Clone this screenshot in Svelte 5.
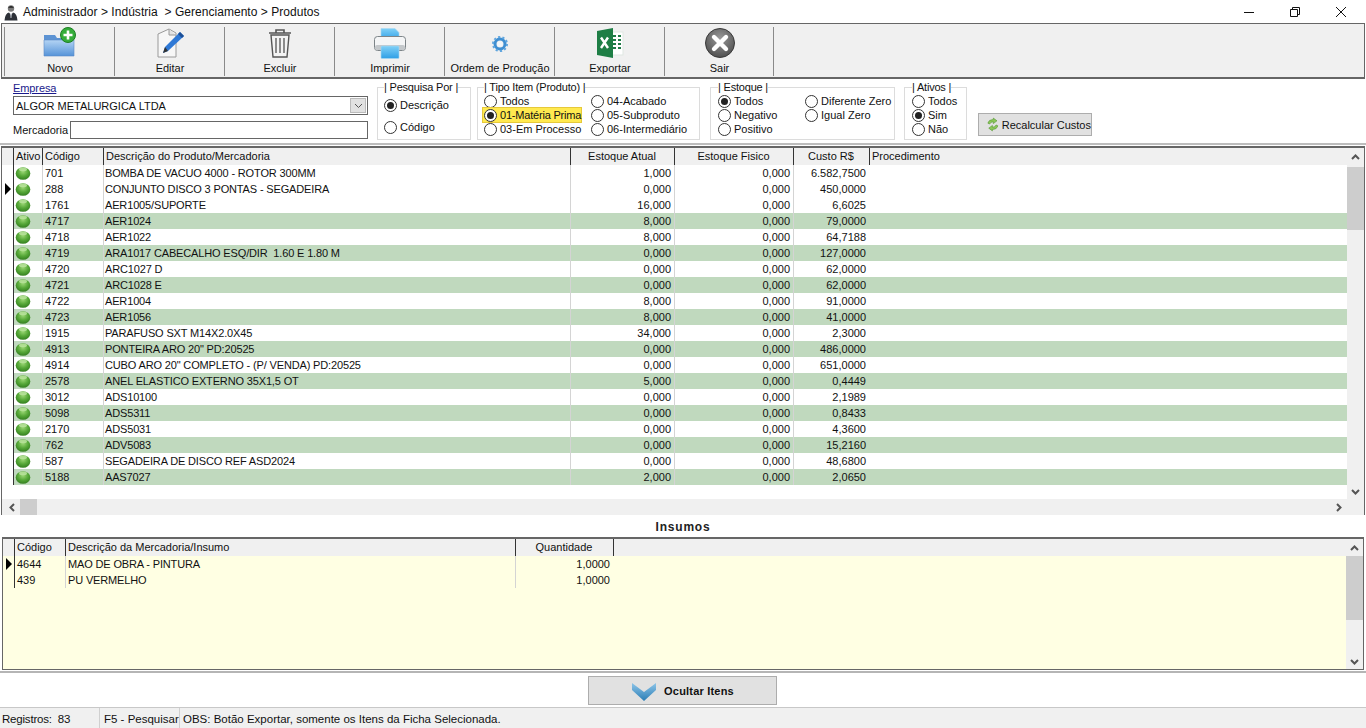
<script>
  const rows = [
    ['701','BOMBA DE VACUO 4000 - ROTOR 300MM','1,000','6.582,7500'],
    ['288','CONJUNTO DISCO 3 PONTAS - SEGADEIRA','0,000','450,0000'],
    ['1761','AER1005/SUPORTE','16,000','6,6025'],
    ['4717','AER1024','8,000','79,0000'],
    ['4718','AER1022','8,000','64,7188'],
    ['4719','ARA1017 CABECALHO ESQ/DIR  1.60 E 1.80 M','0,000','127,0000'],
    ['4720','ARC1027 D','0,000','62,0000'],
    ['4721','ARC1028 E','0,000','62,0000'],
    ['4722','AER1004','8,000','91,0000'],
    ['4723','AER1056','8,000','41,0000'],
    ['1915','PARAFUSO SXT M14X2.0X45','34,000','2,3000'],
    ['4913','PONTEIRA ARO 20" PD:20525','0,000','486,0000'],
    ['4914','CUBO ARO 20" COMPLETO - (P/ VENDA) PD:20525','0,000','651,0000'],
    ['2578','ANEL ELASTICO EXTERNO 35X1,5 OT','5,000','0,4449'],
    ['3012','ADS10100','0,000','2,1989'],
    ['5098','ADS5311','0,000','0,8433'],
    ['2170','ADS5031','0,000','4,3600'],
    ['762','ADV5083','0,000','15,2160'],
    ['587','SEGADEIRA DE DISCO REF ASD2024','0,000','48,6800'],
    ['5188','AAS7027','2,000','2,0650']
  ];
  const tipo = [
    ['Todos', false, false], ['04-Acabado', false, false],
    ['01-Matéria Prima', true, true], ['05-Subproduto', false, false],
    ['03-Em Processo', false, false], ['06-Intermediário', false, false]
  ];
  const estoque = [
    ['Todos', true], ['Diferente Zero', false],
    ['Negativo', false], ['Igual Zero', false],
    ['Positivo', false]
  ];
  const ativos = [['Todos', false], ['Sim', true], ['Não', false]];
</script>

<svg class="defs" width="0" height="0" aria-hidden="true">
  <defs>
    <radialGradient id="ballg" cx="50%" cy="35%" r="65%">
      <stop offset="0" stop-color="#9ad673"/>
      <stop offset="0.55" stop-color="#56a838"/>
      <stop offset="1" stop-color="#347f20"/>
    </radialGradient>
    <linearGradient id="foldg" x1="0" y1="0" x2="0" y2="1">
      <stop offset="0" stop-color="#b4d4f4"/>
      <stop offset="1" stop-color="#5593d8"/>
    </linearGradient>
    <linearGradient id="chevg" x1="0" y1="0" x2="0" y2="1">
      <stop offset="0" stop-color="#8cc4e8"/>
      <stop offset="1" stop-color="#2a7db5"/>
    </linearGradient>
    <linearGradient id="printg" x1="0" y1="0" x2="0" y2="1">
      <stop offset="0" stop-color="#7fd0f7"/>
      <stop offset="1" stop-color="#2f9fe6"/>
    </linearGradient>
    <radialGradient id="exitg" cx="50%" cy="35%" r="70%">
      <stop offset="0" stop-color="#9a9a9a"/>
      <stop offset="1" stop-color="#4a4a4a"/>
    </radialGradient>
    <symbol id="ball" viewBox="0 0 16 14">
      <ellipse cx="8" cy="7.5" rx="7.3" ry="6.3" fill="url(#ballg)"/>
      <ellipse cx="8" cy="3.4" rx="4" ry="1.8" fill="#bfe6a2" opacity=".8"/>
    </symbol>
  </defs>
</svg>

<div class="app">
  <header class="title">
    <svg class="person" width="14" height="17" viewBox="0 0 14 17">
      <circle cx="7" cy="4.5" r="3.2" fill="#7a7a7a"/>
      <path d="M4 3.8 Q7 .2 10 3.8 Z" fill="#222"/>
      <path d="M0.5 16.5 Q1 9.5 5 8.6 L7 11 L9 8.6 Q13 9.5 13.5 16.5 Z" fill="#2d3138"/>
      <path d="M6.2 9.4 L7.8 9.4 L7.4 14 L6.6 14 Z" fill="#c9ced6"/>
    </svg>
    <span>Administrador &gt; Indústria &nbsp;&gt; Gerenciamento &gt; Produtos</span>
    <div class="winctl">
      <svg width="12" height="12" viewBox="0 0 12 12"><path d="M1 6.5H11" stroke="#111" fill="none"/></svg>
      <svg width="12" height="12" viewBox="0 0 12 12"><path d="M1.5 3.5H8.5V10.5H1.5Z M3.5 3.5V1.5H10.5V8.5H8.5" stroke="#111" fill="none"/></svg>
      <svg width="12" height="12" viewBox="0 0 12 12"><path d="M1 1L11 11M11 1L1 11" stroke="#111" fill="none"/></svg>
    </div>
  </header>

  <nav class="toolbar">
    <button class="tool">
      <svg width="36" height="32" viewBox="0 0 36 32">
        <path d="M2 8H13L15 11H32V29H2Z" fill="#5d93d3"/>
        <path d="M2 13H32V29H2Z" fill="url(#foldg)" stroke="#5b8cc8" stroke-width=".6"/>
        <circle cx="26" cy="8" r="7.5" fill="#35ad3a" stroke="#1d7f24"/>
        <path d="M26 3.5V12.5M21.5 8H30.5" stroke="#fff" stroke-width="2.6"/>
      </svg>
      <span>Novo</span>
    </button>
    <button class="tool">
      <svg width="32" height="32" viewBox="0 0 32 32">
        <path d="M4 7L15 2L22 6V30H4Z" fill="#f7f7f7" stroke="#9a9a9a"/>
        <path d="M15 2V8H22" fill="#e3e3e3" stroke="#9a9a9a"/>
        <path d="M26 5L30 9L14 24L9 26L11 20Z" fill="#2f79d6"/>
        <path d="M11 20L14 24L9 26Z" fill="#333"/>
        <path d="M26 5L30 9L28 11L24 7Z" fill="#1d4f96"/>
      </svg>
      <span>Editar</span>
    </button>
    <button class="tool">
      <svg width="28" height="32" viewBox="0 0 28 32">
        <path d="M3 6H25M10 6V3H18V6" stroke="#555" stroke-width="1.6" fill="none"/>
        <path d="M5 8L7 30H21L23 8Z" fill="#f4f4f4" stroke="#555" stroke-width="1.4"/>
        <path d="M10 11V26M14 11V26M18 11V26" stroke="#555" stroke-width="1.3"/>
      </svg>
      <span>Excluir</span>
    </button>
    <button class="tool">
      <svg width="34" height="32" viewBox="0 0 34 32">
        <path d="M8 1.5H22L26 5.5V13H8Z" fill="url(#printg)" stroke="#a8d8f2" stroke-width=".6"/>
        <rect x="1.5" y="9.5" width="31" height="14" rx="3" fill="#f4f5f6" stroke="#7d8488"/>
        <rect x="2" y="18" width="30" height="5" rx="2" fill="#c4c8cb"/>
        <rect x="8" y="19" width="18" height="12.5" rx="1" fill="url(#printg)" stroke="#a8d8f2" stroke-width=".6"/>
      </svg>
      <span>Imprimir</span>
    </button>
    <button class="tool">
      <svg width="32" height="32" viewBox="0 0 32 32">
        <circle cx="16" cy="17" r="5" fill="none" stroke="#3f8fd2" stroke-width="3"/>
        <circle cx="16" cy="17" r="7" fill="none" stroke="#5fa5de" stroke-width="2" stroke-dasharray="2.2 2.2"/>
        <circle cx="16" cy="17" r="2.6" fill="#f2f7fb"/>
      </svg>
      <span>Ordem de Produção</span>
    </button>
    <button class="tool">
      <svg width="32" height="32" viewBox="0 0 32 32">
        <rect x="12" y="5" width="17" height="23" fill="#fff" stroke="#dfe7e2"/>
        <path d="M19 9H22M24 9H27M19 13H22M24 13H27M19 17H22M24 17H27M19 21H22M24 21H27" stroke="#1f7a46" stroke-width="2"/>
        <path d="M3 4L19 1V31L3 28Z" fill="#1e7e45"/>
        <path d="M7 10.5L14 21M14 10.5L7 21" stroke="#fff" stroke-width="2.4"/>
      </svg>
      <span>Exportar</span>
    </button>
    <button class="tool">
      <svg width="32" height="32" viewBox="0 0 32 32">
        <circle cx="16" cy="16" r="14.5" fill="url(#exitg)" stroke="#3a3a3a"/>
        <path d="M10 10L22 22M22 10L10 22" stroke="#fff" stroke-width="4.4" stroke-linecap="round"/>
      </svg>
      <span>Sair</span>
    </button>
  </nav>

  <section class="filters">
    <div class="empresa">
      <a class="link" href="#empresa">Empresa</a>
      <div class="combo"><span>ALGOR METALURGICA LTDA</span>
        <i class="comboarrow">
          <svg width="9" height="6" viewBox="0 0 9 6"><path d="M1 1L4.5 4.5L8 1" stroke="#555" fill="none"/></svg>
        </i>
      </div>
      <div class="merc"><span>Mercadoria</span><div class="input"></div></div>
    </div>

    <fieldset class="g pesquisa">
      <legend>| Pesquisa Por |</legend>
      <label class="r"><i class="dot on"></i>Descrição</label>
      <label class="r"><i class="dot"></i>Código</label>
    </fieldset>

    <fieldset class="g tipo">
      <legend>| Tipo Item (Produto) |</legend>
      {#each tipo as [t, on, hi]}
        <label class="r" class:hi><i class="dot" class:on></i>{t}</label>
      {/each}
    </fieldset>

    <fieldset class="g estoque">
      <legend>| Estoque |</legend>
      {#each estoque as [t, on]}
        <label class="r"><i class="dot" class:on></i>{t}</label>
      {/each}
    </fieldset>

    <fieldset class="g ativos">
      <legend>| Ativos |</legend>
      {#each ativos as [t, on]}
        <label class="r"><i class="dot" class:on></i>{t}</label>
      {/each}
    </fieldset>

    <button class="recalc">
      <svg width="15" height="15" viewBox="0 0 15 15">
        <path d="M2 6Q3 2 8 2L8 0.5L12 3.5L8 6.5V4.5Q5 4.5 4 7Z" fill="#8cc85a" stroke="#4b8f2a" stroke-width=".6"/>
        <path d="M13 9Q12 13 7 13L7 14.5L3 11.5L7 8.5V10.5Q10 10.5 11 8Z" fill="#8cc85a" stroke="#4b8f2a" stroke-width=".6"/>
      </svg>
      Recalcular Custos
    </button>
  </section>

  <section class="grid main">
    <div class="gbody">
      <div class="table">
        <div class="row head">
          <div class="c ind"></div><div class="c dk">Ativo</div><div class="c dk">Código</div>
          <div class="c dk">Descrição do Produto/Mercadoria</div>
          <div class="c dk ctr">Estoque Atual</div><div class="c dk ctr">Estoque Fisico</div>
          <div class="c dk ctr">Custo R$</div><div class="c dk">Procedimento</div>
        </div>
        {#each rows as r, i}
          <div class="row" class:green={i >= 3 && (i - 3) % 2 === 0}>
            <div class="c ind">{#if i === 1}<i class="ptr"></i>{/if}</div>
            <div class="c dk ballc"><svg width="16" height="14"><use href="#ball"/></svg></div>
            <div class="c">{r[0]}</div>
            <div class="c caps">{r[1]}</div>
            <div class="c num">{r[2]}</div>
            <div class="c num">0,000</div>
            <div class="c num">{r[3]}</div>
            <div class="c none"></div>
          </div>
        {/each}
      </div>
      <div class="vs vs1">
        <svg width="9" height="6" viewBox="0 0 9 6"><path d="M1 5L4.5 1.5L8 5" stroke="#555" stroke-width="2" fill="none"/></svg>
        <div class="thumb"></div>
        <svg class="end" width="9" height="6" viewBox="0 0 9 6"><path d="M1 1L4.5 4.5L8 1" stroke="#555" stroke-width="2" fill="none"/></svg>
      </div>
    </div>
    <div class="hs">
      <svg width="6" height="9" viewBox="0 0 6 9"><path d="M5 1L1.5 4.5L5 8" stroke="#555" stroke-width="2" fill="none"/></svg>
      <div class="hthumb"></div>
      <svg class="hend" width="6" height="9" viewBox="0 0 6 9"><path d="M1 1L4.5 4.5L1 8" stroke="#555" stroke-width="2" fill="none"/></svg>
    </div>
  </section>

  <h2 class="insumos">Insumos</h2>

  <section class="grid sub">
    <div class="gbody">
      <div class="table">
        <div class="row head">
          <div class="c ind"></div><div class="c dk">Código</div>
          <div class="c dk">Descrição da Mercadoria/Insumo</div>
          <div class="c dk ctr">Quantidade</div><div class="c dk none"></div>
        </div>
        <div class="row">
          <div class="c ind"><i class="ptr"></i></div><div class="c dk">4644</div>
          <div class="c caps">MAO DE OBRA - PINTURA</div><div class="c num">1,0000</div><div class="c none"></div>
        </div>
        <div class="row">
          <div class="c ind"></div><div class="c dk">439</div>
          <div class="c caps">PU VERMELHO</div><div class="c num">1,0000</div><div class="c none"></div>
        </div>
      </div>
      <div class="vs vs2">
        <svg width="9" height="6" viewBox="0 0 9 6"><path d="M1 5L4.5 1.5L8 5" stroke="#555" stroke-width="2" fill="none"/></svg>
        <div class="thumb"></div>
        <svg class="end" width="9" height="6" viewBox="0 0 9 6"><path d="M1 1L4.5 4.5L8 1" stroke="#555" stroke-width="2" fill="none"/></svg>
      </div>
    </div>
  </section>

  <div class="action">
    <button class="ocultar">
      <svg width="26" height="22" viewBox="0 0 26 22">
        <path d="M1 3L13 12L25 3V10L13 21L1 10Z" fill="url(#chevg)"/>
      </svg>
      <b>Ocultar Itens</b>
    </button>
  </div>

  <footer class="status">
    <div class="s1">Registros:&nbsp; 83</div>
    <div class="s2">F5 - Pesquisar</div>
    <div class="s3">OBS: Botão Exportar, somente os Itens da Ficha Selecionada.</div>
  </footer>
</div>

<style>
  :global(body) { background: #fff; overflow: hidden; }
  .defs { position: absolute; }
  .app {
    width: 1366px; height: 728px; display: flex; flex-direction: column;
    font-family: "Liberation Sans", Arial, sans-serif; font-size: 11px; color: #111;
    overflow: hidden; background: #fff;
  }
  button { font: inherit; color: inherit; }

  .title { height: 23px; display: flex; align-items: center; padding-left: 4px; gap: 5px; font-size: 12px; letter-spacing: .04px; flex: none; }
  .person { flex: none; margin-top: 2px; }
  .winctl { margin-left: auto; display: flex; gap: 34px; padding-right: 19px; }

  .toolbar {
    height: 56px; margin: 0 1px; flex: none; display: flex; padding: 3px 0 1px 2px; box-sizing: border-box;
    background: #f0f0f0; border: 1px solid #666; border-bottom-width: 2px;
  }
  .tool {
    width: 110px; box-sizing: border-box; background: none; border: 0; border-left: 1px solid #8a8a8a;
    padding: 0 0 0 1px; display: flex; flex-direction: column; align-items: center; justify-content: space-between;
  }
  .tool:last-child { width: 110px; border-right: 1px solid #8a8a8a; }
  .tool span { line-height: 13px; padding-bottom: 1px; white-space: nowrap; }
  .tool svg { flex: none; }

  .filters {
    height: 65px; flex: none; box-sizing: border-box; display: flex; align-items: flex-start;
    padding: 0 0 0 13px; border-bottom: 2px solid #bdbdbd; margin-top: 1px;
  }
  .empresa { width: 355px; padding-top: 2px; flex: none; }
  .link { color: #1a1a8c; display: block; line-height: 13px; letter-spacing: -.1px; }
  .combo {
    height: 19px; margin-top: 1px; box-sizing: border-box; border: 1px solid #666; background: #fff;
    display: flex; align-items: center; padding-left: 2px; font-size: 11px;
  }
  .comboarrow {
    margin-left: auto; width: 16px; height: 15px; margin-right: 1px; background: #e1e1e1; border: 1px solid #bbb; box-sizing: border-box;
    display: flex; align-items: center; justify-content: center;
  }
  .merc { display: flex; align-items: center; gap: 2px; margin-top: 6px; }
  .input { flex: 1; height: 18px; box-sizing: border-box; border: 1px solid #666; background: #fff; }

  .g {
    margin: 1px 0 0; padding: 0; border: 1px solid #dcdcdc; box-sizing: border-box; min-width: 0;
    height: 59px; display: grid;
  }
  legend { padding: 0; margin-left: 0; line-height: 13px; font-size: 11px; white-space: nowrap; letter-spacing: -.2px; }
  .pesquisa { margin-left: 9px; width: 94px; padding: 0 0 0 6px; grid-template-rows: 22px 22px; align-content: start; }
  .tipo { margin-left: 6px; width: 223px; padding: 0 0 0 6px; grid-template-columns: 107px 1fr; grid-auto-rows: 14px; align-content: start; }
  .estoque { margin-left: 10px; width: 185px; padding: 0 0 0 7px; grid-template-columns: 87px 1fr; grid-auto-rows: 14px; align-content: start; }
  .ativos { margin-left: 9px; width: 63px; padding: 0 0 0 7px; grid-auto-rows: 14px; align-content: start; }
  .r { display: flex; align-items: center; gap: 3px; white-space: nowrap; font-size: 11px; }
  .r.hi { background: #ffe94f; box-shadow: 0 0 0 1px #e6c93a; margin-left: -1px; padding-left: 1px; width: 97px; letter-spacing: -.2px; }
  .dot {
    width: 13px; height: 13px; border-radius: 50%; border: 1px solid #333; box-sizing: border-box; background: #fff;
    display: flex; align-items: center; justify-content: center; flex: none;
  }
  .dot.on::after { content: ""; width: 7px; height: 7px; border-radius: 50%; background: #222; }

  .recalc {
    margin: 33px 0 0 11px; width: 114px; height: 23px; box-sizing: border-box; background: #e1e1e1; border: 1px solid #adadad;
    display: flex; align-items: center; gap: 2px; padding: 0 0 0 7px; font-size: 11px; white-space: nowrap;
  }

  .grid { flex: none; box-sizing: border-box; border: 1px solid #666; border-top-width: 2px; }
  .main { margin: 1px 1px 0; height: 369px; }
  .sub { margin: 0 2px; height: 133px; background: #ffffe3; }
  .gbody { display: flex; }
  .main .gbody { height: 351px; }
  .sub .gbody { height: 130px; }
  .table { flex: 1; min-width: 0; }
  .sub .table { background: #ffffe3; }
  .row { display: grid; height: 16px; line-height: 16px; }
  .main .row { grid-template-columns: 11px 29px 61px 467px 104px 119px 76px 1fr; }
  .sub .row { grid-template-columns: 11px 51px 450px 98px 1fr; }
  .row.head { height: 17px; line-height: 17px; background: #f0f0f0; }
  .row.green { background: #c0d9be; }
  .c { box-sizing: border-box; padding: 0 3px 0 2px; border-left: 1px solid #d4d4d4; white-space: pre; overflow: hidden; position: relative; }
  .c.dk, .head .c { border-left-color: #333; }
  .c.none { border-left-color: transparent; }
  .head .c.none { border-left-color: #333; }
  .caps { padding-left: 1px; letter-spacing: -.15px; }
  .sub .caps { padding-left: 2px; }
  .c.ind { border-left: 0; padding: 0; background: #fff; display: flex; align-items: center; justify-content: center; }
  .head .c.ind { background: #f0f0f0; }
  .sub .c.ind { background: #ffffe3; }
  .sub .head .c.ind { background: #f0f0f0; }
  .ctr { text-align: center; }
  .num { text-align: right; }
  .ballc { padding: 1px 0 0 1px; line-height: 0; }
  .ptr { width: 0; height: 0; border-left: 6px solid #000; border-top: 6px solid transparent; border-bottom: 6px solid transparent; }

  .vs { width: 17px; flex: none; background: #f0f0f0; display: flex; flex-direction: column; align-items: center; padding: 6px 0 4px; box-sizing: border-box; }
  .vs .thumb { width: 100%; background: #cdcdcd; flex: none; }
  .vs1 .thumb { height: 63px; margin-top: 7px; }
  .vs2 .thumb { height: 64px; margin-top: 5px; }
  .vs .end { margin-top: auto; }
  .hs { height: 16px; background: #f0f0f0; display: flex; align-items: center; padding-left: 7px; padding-right: 22px; }
  .hthumb { width: 17px; height: 100%; background: #cdcdcd; margin-left: 5px; }
  .hend { margin-left: auto; }

  .insumos { margin: 0; height: 22px; line-height: 21px; box-sizing: border-box; padding-top: 2px; flex: none; text-align: center; font-size: 12px; letter-spacing: .8px; font-weight: 700; color: #222; }

  .action {
    height: 36px; flex: none; box-sizing: border-box; border-top: 2px solid #b5b5b5; margin: 1px 0 0;
    display: flex; justify-content: center; padding: 3px 1px 0 0;
  }
  .ocultar {
    width: 189px; height: 29px; box-sizing: border-box; background: #e1e1e1; border: 1px solid #adadad;
    display: flex; align-items: center; justify-content: center; gap: 7px; padding: 0;
  }
  .ocultar b { font-size: 11px; letter-spacing: .2px; }

  .status {
    flex: 1; background: #f0f0f0; border-top: 1px solid #c8c8c8; display: flex; align-items: center; font-size: 11.5px; box-sizing: border-box;
  }
  .status div { height: 100%; display: flex; align-items: center; white-space: nowrap; box-sizing: border-box; padding-top: 2px; }
  .s1 { width: 99px; padding-left: 2px; letter-spacing: -.2px; }
  .s2 { width: 80px; padding-left: 4px; border-left: 1px solid #d0d0d0; }
  .s3 { padding-left: 3px; border-left: 1px solid #d0d0d0; }
</style>
